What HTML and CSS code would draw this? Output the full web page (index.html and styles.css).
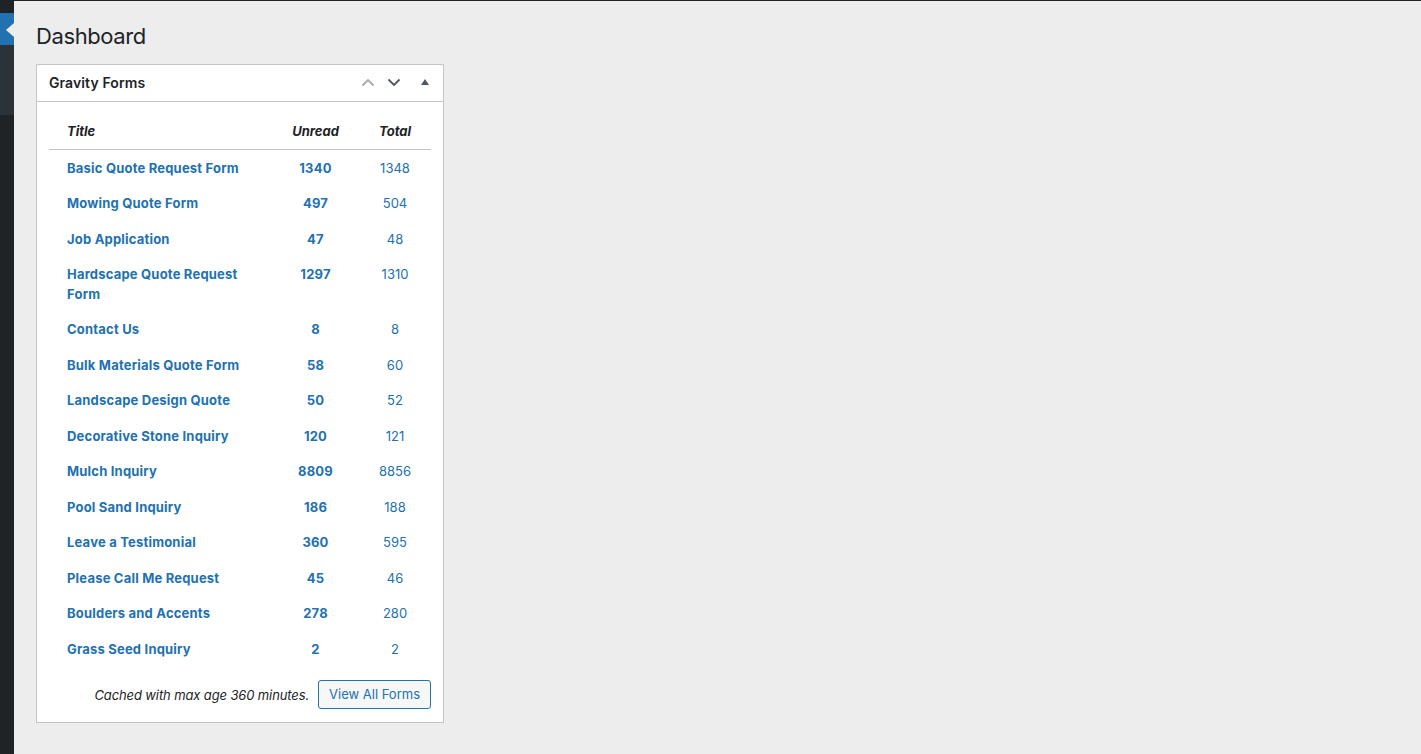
FILE: index.html
```html
<!DOCTYPE html>
<html>
<head>
<meta charset="utf-8">
<title>Dashboard</title>
<link rel="stylesheet" href="styles.css">
</head>
<body>
  <div class="topbar"></div>
  <div class="layout">
    <div class="sidebar">
      <div class="menu-top"></div>
      <div class="menu-current"></div>
      <div class="menu-sub"></div>
    </div>
    <div class="content">
      <h1>Dashboard</h1>
      <div class="postbox">
        <div class="postbox-header">
          <h2>Gravity Forms</h2>
          <div class="handles">
            <span class="handle up"><svg width="14" height="9" viewBox="0 0 14 9"><path d="M1.5 7.5 7 2l5.5 5.5" fill="none" stroke="currentColor" stroke-width="1.8"/></svg></span>
            <span class="handle down"><svg width="14" height="9" viewBox="0 0 14 9"><path d="M1.5 1.5 7 7l5.5-5.5" fill="none" stroke="currentColor" stroke-width="1.8"/></svg></span>
            <span class="handle toggle"><svg width="8" height="6" viewBox="0 0 8 6"><path d="M0 6 4 0l4 6z" fill="currentColor"/></svg></span>
          </div>
        </div>
        <div class="inside">
          <table class="forms">
            <thead>
              <tr>
                <th class="col-title">Title</th>
                <th class="col-unread">Unread</th>
                <th class="col-total">Total</th>
              </tr>
            </thead>
            <tbody>
              <tr><td class="col-title"><a href="#">Basic Quote Request Form</a></td><td class="col-unread"><a href="#">1340</a></td><td class="col-total"><a href="#">1348</a></td></tr>
              <tr><td class="col-title"><a href="#">Mowing Quote Form</a></td><td class="col-unread"><a href="#">497</a></td><td class="col-total"><a href="#">504</a></td></tr>
              <tr><td class="col-title"><a href="#">Job Application</a></td><td class="col-unread"><a href="#">47</a></td><td class="col-total"><a href="#">48</a></td></tr>
              <tr><td class="col-title"><a href="#">Hardscape Quote Request Form</a></td><td class="col-unread"><a href="#">1297</a></td><td class="col-total"><a href="#">1310</a></td></tr>
              <tr><td class="col-title"><a href="#">Contact Us</a></td><td class="col-unread"><a href="#">8</a></td><td class="col-total"><a href="#">8</a></td></tr>
              <tr><td class="col-title"><a href="#">Bulk Materials Quote Form</a></td><td class="col-unread"><a href="#">58</a></td><td class="col-total"><a href="#">60</a></td></tr>
              <tr><td class="col-title"><a href="#">Landscape Design Quote</a></td><td class="col-unread"><a href="#">50</a></td><td class="col-total"><a href="#">52</a></td></tr>
              <tr><td class="col-title"><a href="#">Decorative Stone Inquiry</a></td><td class="col-unread"><a href="#">120</a></td><td class="col-total"><a href="#">121</a></td></tr>
              <tr><td class="col-title"><a href="#">Mulch Inquiry</a></td><td class="col-unread"><a href="#">8809</a></td><td class="col-total"><a href="#">8856</a></td></tr>
              <tr><td class="col-title"><a href="#">Pool Sand Inquiry</a></td><td class="col-unread"><a href="#">186</a></td><td class="col-total"><a href="#">188</a></td></tr>
              <tr><td class="col-title"><a href="#">Leave a Testimonial</a></td><td class="col-unread"><a href="#">360</a></td><td class="col-total"><a href="#">595</a></td></tr>
              <tr><td class="col-title"><a href="#">Please Call Me Request</a></td><td class="col-unread"><a href="#">45</a></td><td class="col-total"><a href="#">46</a></td></tr>
              <tr><td class="col-title"><a href="#">Boulders and Accents</a></td><td class="col-unread"><a href="#">278</a></td><td class="col-total"><a href="#">280</a></td></tr>
              <tr><td class="col-title"><a href="#">Grass Seed Inquiry</a></td><td class="col-unread"><a href="#">2</a></td><td class="col-total"><a href="#">2</a></td></tr>
            </tbody>
          </table>
          <div class="footer">
            <em>Cached with max age 360 minutes.</em>
            <a href="#" class="button">View All Forms</a>
          </div>
        </div>
      </div>
    </div>
  </div>
</body>
</html>
```

FILE: styles.css
```css
* {
  box-sizing: border-box;
}

body {
  margin: 0;
  background-color: #ededed;
  color: #1d2327;
  font-family: Inter, "Noto Sans", sans-serif;
  font-size: 13px;
}

.topbar {
  height: 1px;
  background-color: #1d2327;
}

.layout {
  display: flex;
  min-height: 753px;
}

.sidebar {
  width: 14px;
  background-color: #1d2327;
}

.menu-top {
  height: 12px;
}

.menu-current {
  height: 32px;
  background-color: #2271b1;
  position: relative;
}

.menu-current::after {
  content: "";
  position: absolute;
  right: 0;
  top: 10px;
  border: 7px solid transparent;
  border-right-color: #ededed;
  border-left-width: 0;
  border-right-width: 8px;
}

.menu-sub {
  height: 70px;
  background-color: #2c3338;
}

.content {
  flex: 1;
  padding-left: 22px;
}

h1 {
  margin: 0;
  padding: 21px 0 0;
  font-size: 22px;
  font-weight: 400;
  line-height: 29px;
  letter-spacing: -0.4px;
  color: #1d2327;
}

.postbox {
  margin-top: 13px;
  width: 408px;
  background-color: #fff;
  border: 1px solid #c3c4c7;
}

.postbox-header {
  height: 37px;
  display: flex;
  align-items: center;
  justify-content: space-between;
  border-bottom: 1px solid #c3c4c7;
  padding: 0 0 1px 12px;
}

.postbox-header h2 {
  margin: 0;
  font-size: 14px;
  font-weight: 600;
  letter-spacing: 0.1px;
}

.handles {
  display: flex;
  align-items: center;
  height: 100%;
}

.handle {
  display: flex;
  align-items: center;
  justify-content: center;
  width: 26px;
  height: 100%;
  color: #50575e;
}

.handle.up {
  color: #a7aaad;
}

.handle.toggle {
  width: 36px;
  padding-bottom: 2px;
}

.inside {
  padding: 12px 12px 13px;
}

.forms {
  width: 100%;
  border-collapse: collapse;
  table-layout: fixed;
}

.forms th,
.forms td {
  padding: 8px 10px;
  line-height: 19.5px;
  vertical-align: top;
  font-size: 13px;
}

.forms th {
  font-style: italic;
  font-weight: 700;
  padding-bottom: 7px;
  border-bottom: 1px solid #c3c4c7;
}

.forms tbody tr:first-child td {
  padding-top: 9px;
}

.forms .col-title {
  text-align: left;
  padding-left: 18px;
  width: 223px;
}

.forms .col-unread {
  text-align: center;
  width: 87px;
}

.forms .col-total {
  text-align: center;
}

.forms a {
  color: #2271b1;
  text-decoration: none;
}

.forms .col-title a,
.forms .col-unread a {
  font-weight: 700;
  letter-spacing: 0.2px;
}

.footer {
  display: flex;
  justify-content: flex-end;
  align-items: center;
  gap: 9px;
  margin-top: 13px;
}

.footer em {
  color: #1d2327;
  letter-spacing: -0.12px;
}

.button {
  display: inline-block;
  height: 29px;
  line-height: 27px;
  padding: 0 10px;
  border: 1px solid #2271b1;
  border-radius: 3px;
  background-color: #f6f7f7;
  color: #2271b1;
  text-decoration: none;
  font-size: 13px;
}
```
